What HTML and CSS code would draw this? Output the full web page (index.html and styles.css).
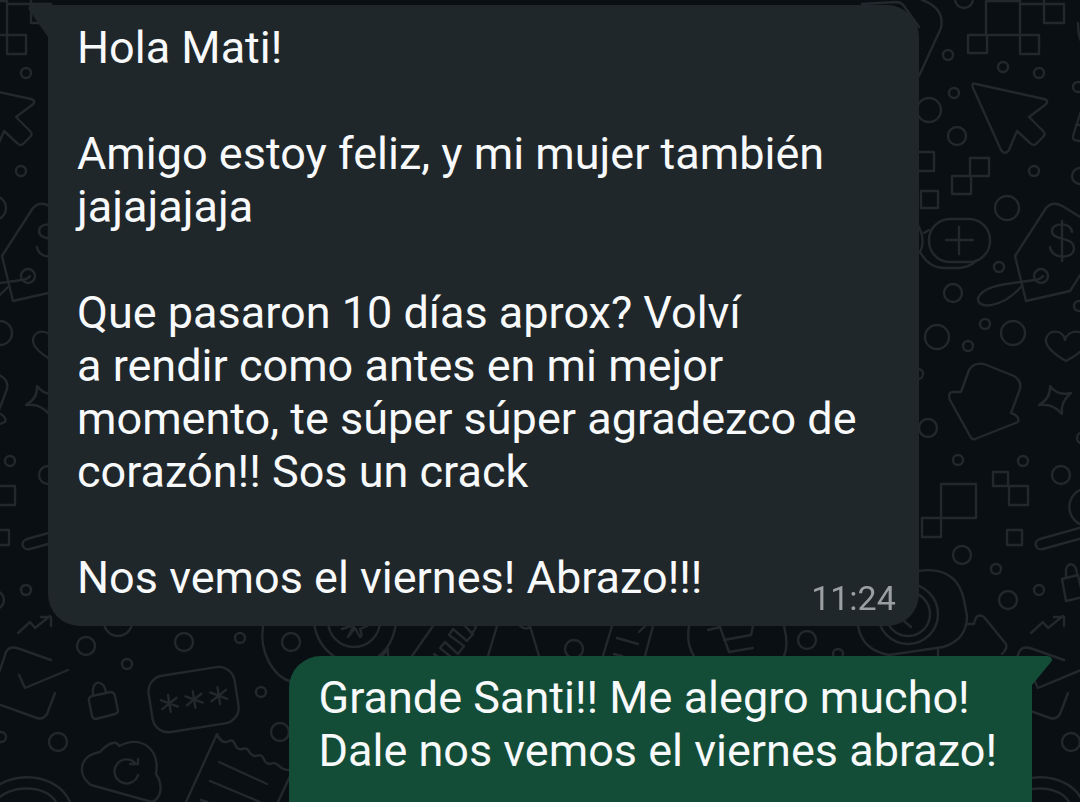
FILE: index.html
```html
<!DOCTYPE html>
<html lang="es">
<head>
    <meta charset="UTF-8">
    <meta name="viewport" content="width=device-width, initial-scale=1.0">
    <title>Chat</title>
    <link rel="stylesheet" href="styles.css">
</head>
<body>
    <svg class="wallpaper" viewBox="0 0 1080 802" preserveAspectRatio="xMinYMin slice" aria-hidden="true">
        <defs>
            <!-- doodles that repeat on both sides of the chat -->
            <g id="edge">
                <path d="M986 1h34v34h-34zM1020 4h25M1044 4h20v19h-20zM1044 4v-6M968 35h19v18h-19zM1020 35h19v19h-19z"/>
                <circle cx="1003" cy="67" r="5"/>
                <circle cx="1039" cy="73" r="5"/>
                <path d="M976 84L1044 99Q1050 101 1045 105L1029 117L1043 131Q1046 134 1043 137L1037 143Q1034 147 1030 143L1017 131L1009 150Q1005 156 1001 150L973 88Q971 82 976 84Z"/>
                <circle cx="1034" cy="171" r="5"/>
                <circle cx="1007" cy="208" r="12"/>
                <path d="M1085 220L1064 207Q1053 200 1046 208L1015 256L1026 301L1070 291L1086 266"/>
                <path d="M1072 232C1071 222 1052 222 1052 231C1052 242 1074 235 1074 249C1073 260 1051 259 1050 247M1062 221v40"/>
                <circle cx="1041" cy="276" r="7"/>
                <path d="M1043 276Q1040 280 1034 280C1010 284 984 284 978 298C977 310 1002 308 1021 287"/>
                <circle cx="1013" cy="333" r="12"/>
                <circle cx="1079" cy="306" r="5"/>
                <path d="M1066 361C1054 354 1045 346 1046 339C1048 329 1063 329 1065 340C1068 329 1084 329 1087 339C1087 347 1078 355 1066 361Z"/>
                <path d="M1050 386Q1057 396 1071 393Q1060 402 1062 414Q1053 403 1039 405Q1051 398 1050 386Z"/>
                <path d="M961 392L969 370Q974 362 984 364L1014 376Q1022 381 1020 389L1011 413Q1020 416 1018 422L975 439Q972 440 970 436L950 400Q947 391 955 392Z"/>
                <circle cx="1023" cy="461" r="5"/>
                <circle cx="1061" cy="475" r="9"/>
                <path d="M993 472h15v14h-15zM1009 486h19v19h-19zM1007 530h15v15h-15z"/>
                <path d="M1100 492A19 19 0 1 0 1100 522M1090 525L1040 539C1032 542 1036 551 1043 549L1090 536"/>
                <circle cx="1008" cy="600" r="9"/>
                <circle cx="1039" cy="590" r="5"/>
                <path d="M1062 579L1078 575L1083 597L1066 601ZM1066 577V569C1068 562 1076 562 1077 574"/>
                <path d="M1031 633L1043 622L1048 628L1063 616M1054 617H1064V626"/>
                <path d="M1064 660L1030 648Q1022 646 1019 652L1011 676M1081 670L1038 688L1032 675M1011 704L1050 718Q1056 720 1060 714L1068 693"/>
                <circle cx="1071" cy="742" r="9"/>
                <circle cx="1014" cy="737" r="5"/>
                <path d="M997 802C1010 770 1068 768 1083 802M1008 802C1021 784 1059 784 1069 802"/>
                <path d="M1078 23Q1078 36 1082 43M1081 111L1073 136Q1072 141 1080 141M1076 125h8"/>
                <circle cx="1078" cy="87" r="5"/>
                <circle cx="1080" cy="176" r="8"/>
                <circle cx="1083" cy="438" r="6"/>
            </g>
        </defs>
        <use href="#edge"/>
        <use href="#edge" x="-1013"/>

        <!-- right side -->
        <path d="M862 4L896 2Q901 2 904 6L919 27M922 0Q945 8 941 28L919 76M919 152h15V171H919M921 191h17v17h-17zM970 158h19v18h-19zM952 176h19v18h-19z"/>
        <circle cx="964" cy="-1" r="9"/>
        <circle cx="948" cy="55" r="5"/>
        <circle cx="954" cy="93" r="5"/>
        <circle cx="929" cy="110" r="12"/>
        <circle cx="957" cy="136" r="9"/>
        <rect x="929" y="219" width="61" height="43" rx="21"/>
        <path d="M946 240h27M959 227v27M918 225Q926 240 920 252Q929 268 944 268H958Q968 268 976 261M924 233l5-3"/>
        <circle cx="999" cy="267" r="5"/>
        <circle cx="953" cy="293" r="9"/>
        <circle cx="937" cy="337" r="12"/>
        <circle cx="985" cy="324" r="5"/>
        <circle cx="968" cy="346" r="5"/>
        <circle cx="918" cy="374" r="5"/>
        <circle cx="928" cy="428" r="9"/>
        <circle cx="958" cy="460" r="5"/>
        <path d="M941 484h35v34h-35zM922 518h19v19h-19z"/>
        <circle cx="962" cy="555" r="9"/>
        <circle cx="996" cy="569" r="5"/>

        <!-- camera and tag behind the time -->
        <path d="M918 571C944 567 959 577 964 600L967 616Q967 640 943 647L889 655Q862 650 858 626M966 624h8Q976 612 984 617L1006 644Q1008 648 1002 654M938 648v8M904 621l7 6"/>
        <circle cx="908" cy="614" r="30"/>
        <circle cx="908" cy="614" r="22"/>

        <!-- between the bubbles -->
        <circle cx="291" cy="642" r="9"/>
        <circle cx="574" cy="649" r="9"/>
        <circle cx="807" cy="640" r="9"/>
        <circle cx="838" cy="654" r="5"/>
        <circle cx="354" cy="621" r="26"/>
        <path d="M314 623Q317 645 335 657M396 623Q393 645 379 656M383 655l5-6v8M342 629l12-4-6 12 7-9 5 9q3-1 0-8l7-3"/>
        <path d="M433 626L412 656M434 654l4 3M440 648l5-6 13 12 6-8-15-11 4-6 14 12 6-7-14-14M440 648l11 9M462 622l10 12 4-7-7-7M497 626l-9 30M520 626q7 5 10 0l9 30"/>
        <path d="M612 626l-9 30M653 626l-8 30M617 638l21 6M639 632l7-7M614 654l8 2M689 626Q686 644 694 656M784 626Q789 645 784 656M708 630l12-3 9 25 24-4M724 640l27-5 2-9"/>

        <!-- left bottom -->
        <circle cx="26" cy="590" r="5"/>
        <circle cx="86" cy="646" r="9"/>
        <circle cx="118" cy="622" r="14"/>
        <circle cx="184" cy="642" r="9"/>
        <circle cx="240" cy="638" r="5"/>
        <circle cx="127" cy="664" r="5"/>
        <circle cx="261" cy="692" r="5"/>
        <circle cx="280" cy="732" r="9"/>
        <path d="M263 626C259 652 273 677 292 682"/>
        <path d="M92 696L111 692Q114 692 115 696L118 711Q118 713 115 714L96 719Q93 719 92 716L89 701Q88 697 92 696ZM93 695C91 679 104 679 106 692"/>
        <g transform="rotate(-9 194 699)">
            <rect x="150" y="671" width="87" height="57" rx="16"/>
            <path d="M169 691v17M161 695l16 9M161 704l16-9M194 691v17M186 695l16 9M186 704l16-9M219 691v17M211 695l16 9M211 704l16-9"/>
        </g>
        <path d="M100 752C110 741 117 741 119 746C141 735 160 748 156 774C163 784 162 798 152 802L91 785C76 774 80 755 100 752Z"/>
        <path d="M136 764A12 12 0 1 0 138 775M130 764h8v-5"/>
        <path d="M186 802L217 734C219 740 224 744 229 741C237 738 233 751 242 749C251 746 247 756 256 756C266 752 262 765 270 764C280 760 277 771 291 770M219 762L267 784M210 781L260 802M201 800l6 2M291 774L278 802"/>
    </svg>

    <main class="chat">
        <article class="message received">
            <svg class="tail" viewBox="0 0 20 32" aria-hidden="true"><path d="M20 0H3Q-1 1 1 5L20 32Z"/></svg>
            <p>Hola Mati!</p>
            <p>Amigo estoy feliz, y mi mujer también jajajajaja</p>
            <p>Que pasaron 10 días aprox? Volví a&nbsp;rendir como antes en mi mejor momento, te súper súper agradezco de corazón!! Sos un crack</p>
            <p>Nos vemos el viernes! Abrazo!!!</p>
            <time class="time" datetime="11:24">11:24</time>
        </article>

        <article class="message sent">
            <svg class="tail" viewBox="0 0 20 32" aria-hidden="true"><path d="M0 0H16Q22 2 19 6L0 29Z"/></svg>
            <p>Grande Santi!! Me alegro mucho!<br>Dale nos vemos el viernes abrazo!</p>
        </article>
    </main>
</body>
</html>
```
FILE: styles.css
```css
* { box-sizing: border-box; }
body {
    margin: 0;
    min-height: 100vh;
    background-color: #0a0f13;
    color: #f7f9fa;
    font-family: Roboto, "Liberation Sans", sans-serif;
    font-size: 45px;
    line-height: 53px;
    overflow-x: hidden;
}
.wallpaper {
    position: fixed;
    inset: 0;
    width: 100%;
    height: 100%;
    fill: none;
    stroke: #22282c;
    stroke-width: 2.4;
    stroke-linecap: round;
    stroke-linejoin: round;
}
.chat {
    position: relative;
    display: flex;
    flex-direction: column;
    gap: 30px;
    padding: 5px 48px 0;
}
.message { position: relative; }
.message p { margin: 0; }
.message p + p { margin-top: 53px; }
.received {
    align-self: flex-start;
    width: 88.5%;
    padding: 16px 29px 22px;
    border-radius: 0 32px 32px 32px;
    background-color: #20272a;
}
.sent {
    align-self: flex-end;
    padding: 15px 35px 25px 29px;
    border-radius: 32px 0 0 0;
    background-color: #144d37;
}
.tail {
    position: absolute;
    top: 0;
    width: 20px;
    height: 32px;
}
.received .tail { right: 100%; fill: #20272a; }
.sent .tail { left: 100%; fill: #144d37; }
.time {
    position: absolute;
    right: 23px;
    bottom: 8px;
    color: #9a9fa2;
    font-size: 34px;
    line-height: 40px;
}
```
